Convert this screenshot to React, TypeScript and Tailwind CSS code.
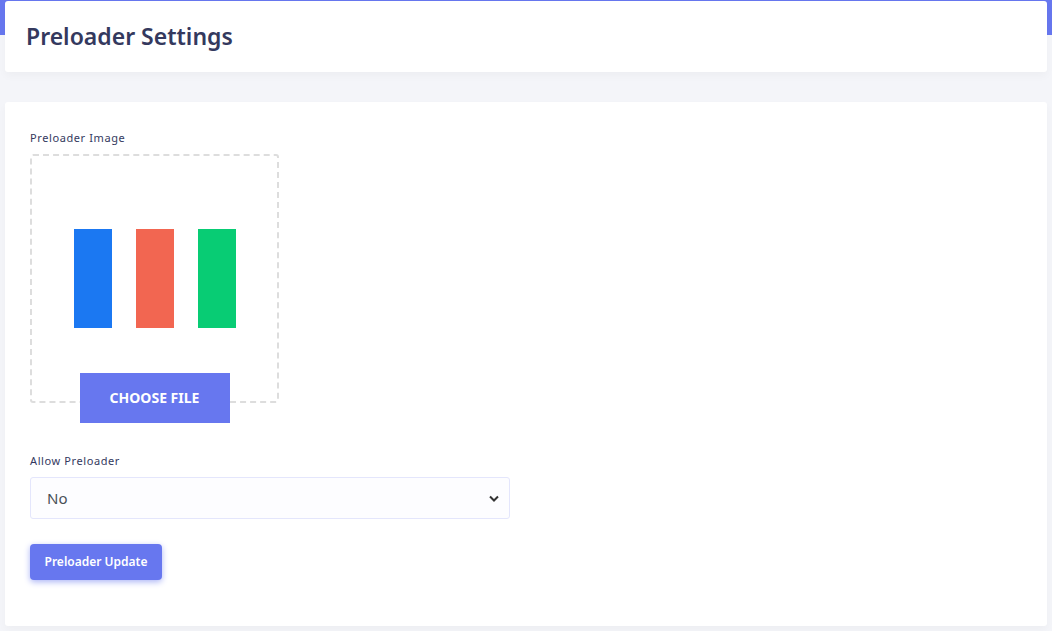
import React from "react";

export default function App() {
  return (
    <div className="relative min-h-[631px] w-[1052px] bg-[#f4f5f9]" style={{ fontFamily: '"Noto Sans", Lato, sans-serif' }}>
      <div className="absolute left-0 top-0 h-[35px] w-full bg-[#6777ef]" />
      <div className="relative flex flex-col gap-[30px] px-[5px] pt-[1px]">
        <div className="flex h-[71px] items-center rounded-[3px] bg-white px-[21px] shadow-[0_4px_8px_rgba(0,0,0,0.03)]">
          <h1 className="text-[23px] font-semibold text-[#34395e]">Preloader Settings</h1>
        </div>
        <div className="flex h-[524px] flex-col items-start rounded-[3px] bg-white px-[25px] pt-[28px] shadow-[0_4px_8px_rgba(0,0,0,0.03)]">
          <div className="text-[11px] tracking-[0.6px] text-[#34395e]">Preloader Image</div>
          <div className="mt-[7px] flex h-[249px] w-[249px] flex-col items-center rounded-[3px] border-2 border-dashed border-[#dddddd] pt-[73px]">
            <div className="flex gap-[24px]">
              <div className="h-[99px] w-[38px] bg-[#1b78f2]" />
              <div className="h-[99px] w-[38px] bg-[#f26651]" />
              <div className="h-[99px] w-[38px] bg-[#08cc74]" />
            </div>
            <div className="mt-[45px] flex h-[50px] w-[150px] shrink-0 items-center justify-center bg-[#6777ef] text-[14px] font-bold text-white">CHOOSE FILE</div>
          </div>
          <div className="mt-[50px] text-[11px] tracking-[0.6px] text-[#34395e]">Allow Preloader</div>
          <div className="mt-[8px] flex h-[42px] w-[480px] items-center justify-between rounded-[3px] border border-[#e4e6fc] bg-[#fdfdff] pl-[16px] pr-[10px]">
            <span className="text-[15px] text-[#495057]">No</span>
            <svg width="10" height="7" viewBox="0 0 10 7"><path d="M1 1.5 L5 5.5 L9 1.5" stroke="#333" strokeWidth="2" fill="none" /></svg>
          </div>
          <button className="mt-[25px] flex h-[36px] w-[132px] items-center justify-center rounded-[4px] bg-[#6777ef] text-[12px] font-semibold text-white shadow-[0_2px_6px_#acb5f6]">Preloader Update</button>
        </div>
      </div>
    </div>
  );
}
